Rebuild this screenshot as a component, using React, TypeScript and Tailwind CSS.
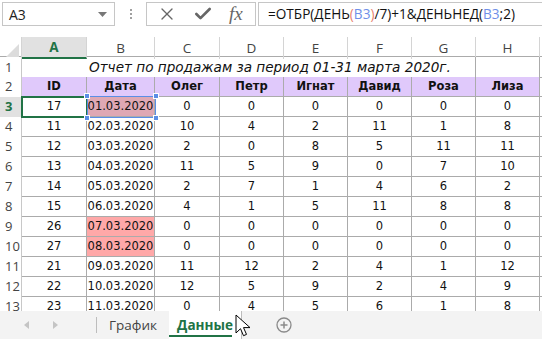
import { X, Check } from 'lucide-react';

const COLS = 'grid grid-cols-[22px_65px_68px_65px_64px_64px_64px_64px_64px_1fr]';
const LETTERS = ['A', 'B', 'C', 'D', 'E', 'F', 'G', 'H'];
const NAMES = ['ID', 'Дата', 'Олег', 'Петр', 'Игнат', 'Давид', 'Роза', 'Лиза'];

const rows: { n: number; id: number; date: string; vals: number[]; pink?: boolean }[] = [
  { n: 3, id: 17, date: '01.03.2020', vals: [0, 0, 0, 0, 0, 0] },
  { n: 4, id: 11, date: '02.03.2020', vals: [10, 4, 2, 11, 1, 8] },
  { n: 5, id: 12, date: '03.03.2020', vals: [2, 0, 8, 5, 11, 11] },
  { n: 6, id: 13, date: '04.03.2020', vals: [11, 5, 9, 0, 7, 10] },
  { n: 7, id: 14, date: '05.03.2020', vals: [2, 7, 1, 4, 6, 2] },
  { n: 8, id: 15, date: '06.03.2020', vals: [4, 1, 5, 11, 8, 8] },
  { n: 9, id: 26, date: '07.03.2020', vals: [0, 0, 0, 0, 0, 0], pink: true },
  { n: 10, id: 27, date: '08.03.2020', vals: [0, 0, 0, 0, 0, 0], pink: true },
  { n: 11, id: 21, date: '09.03.2020', vals: [11, 12, 2, 4, 1, 12] },
  { n: 12, id: 22, date: '10.03.2020', vals: [12, 5, 9, 2, 4, 9] },
  { n: 13, id: 23, date: '11.03.2020', vals: [0, 4, 5, 6, 1, 8] },
];

const ui = "font-['Open_Sans',sans-serif]";
const cellFont = "font-['DejaVu_Sans',sans-serif] text-[11.5px] text-[#111]";

function RowNum({ n, active }: { n: number; active?: boolean }) {
  return (
    <div className={`flex items-center pl-[5px] text-[13px] border-r border-[#c8c8c8] ${ui} ${active ? 'bg-[#e1e1e1] text-[#217346] font-bold' : 'text-[#444]'}`}>
      {n}
    </div>
  );
}

function Cell({ children, bg, bold }: { children?: React.ReactNode; bg?: string; bold?: boolean }) {
  return (
    <div className={`flex items-center justify-center border-r border-b border-[#ababab] ${bg ?? ''} ${bold ? 'font-bold' : ''}`}>
      {children}
    </div>
  );
}

function Handle({ className }: { className: string }) {
  return <div className={`absolute w-[6px] h-[6px] bg-[#5b8ee6] border border-white ${className}`} />;
}

export default function App() {
  return (
    <div className="w-[542px] h-[339px] bg-white overflow-hidden flex flex-col relative">
      {/* formula bar */}
      <div className="h-[30px] flex items-start pt-[2px]">
        <div className={`ml-[2px] w-[113px] h-[24px] border border-[#c6c6c6] flex items-center justify-between pl-[6px] pr-[7px] text-[14px] text-[#222] ${ui}`}>
          <span>A3</span>
          <svg width="9" height="5" viewBox="0 0 9 5"><path d="M0 0h9L4.5 5z" fill="#777" /></svg>
        </div>
        <div className="w-[31px] h-[24px] flex flex-col items-center justify-center gap-[2px]">
          <div className="w-[2px] h-[2px] bg-[#a0a0a0]" />
          <div className="w-[2px] h-[2px] bg-[#a0a0a0]" />
          <div className="w-[2px] h-[2px] bg-[#a0a0a0]" />
        </div>
        <div className="w-[110px] h-[24px] border border-[#c6c6c6] flex items-center pl-[10px] gap-[16px]">
          <X size={20} strokeWidth={1.6} color="#666" />
          <Check size={20} strokeWidth={3.2} color="#666" />
          <span className="font-['Liberation_Serif',serif] italic text-[19px] text-[#666] leading-none -mt-[2px]">fx</span>
        </div>
        <div className={`ml-[2px] flex-1 h-[24px] border-l border-t border-b border-[#c6c6c6] flex items-center pl-[9px] text-[13.6px] text-[#111] ${ui}`}>
          <span>=ОТБР(ДЕНЬ</span>
          <span className="text-[#e87f6f]">(</span>
          <span className="text-[#6f8fe8]">B3</span>
          <span className="text-[#e87f6f]">)</span>
          <span>/7)+1&amp;ДЕНЬНЕД(</span>
          <span className="text-[#6f8fe8]">B3</span>
          <span>;2)</span>
        </div>
      </div>

      {/* sheet */}
      <div className="mt-[7px] flex-1 relative overflow-hidden">
        <div className={`${COLS} h-[20px] border-b border-[#ababab] ${ui} text-[13.5px] text-[#444]`}>
          <div className="relative border-r border-[#d4d4d4]">
            <svg className="absolute right-[2px] bottom-[2px]" width="13" height="13" viewBox="0 0 13 13"><path d="M13 0V13H0z" fill="#dcdcdc" /></svg>
          </div>
          {LETTERS.map((l, i) => (
            <div key={l} className={`flex items-center justify-center border-r border-[#d4d4d4] ${i === 0 ? 'bg-[#e1e1e1] text-[#217346] font-bold border-b-2 border-b-[#217346]' : ''}`}>
              {l}
            </div>
          ))}
          <div />
        </div>

        <div className={cellFont}>
          {/* row 1 */}
          <div className={`${COLS} h-[20px]`}>
            <RowNum n={1} />
            <div className="border-b border-[#ababab]" />
            <div className="col-span-6 flex items-center pl-[2px] italic text-[13.6px] border-r border-b border-[#ababab] whitespace-nowrap">
              Отчет по продажам за период 01-31 марта 2020г.
            </div>
            <Cell />
            <div className="border-b border-[#ababab]" />
          </div>
          {/* row 2 */}
          <div className={`${COLS} h-[20px]`}>
            <RowNum n={2} />
            {NAMES.map((t) => (
              <Cell key={t} bg="bg-[#e0c9fb]" bold>{t}</Cell>
            ))}
            <div className="border-b border-[#ababab]" />
          </div>
          {rows.map((r) => (
            <div key={r.n} className={`${COLS} h-[20px]`}>
              <RowNum n={r.n} active={r.n === 3} />
              <Cell>{r.id}</Cell>
              <Cell bg={r.n === 3 ? 'bg-[#dfa8b4]' : r.pink ? 'bg-[#ffa8a8]' : ''}>{r.date}</Cell>
              {r.vals.map((v, i) => (
                <Cell key={i}>{v}</Cell>
              ))}
              <div className="border-b border-[#ababab]" />
            </div>
          ))}
        </div>

        {/* active cell A3 */}
        <div className="absolute left-[21px] top-[59px] w-[67px] h-[22px] border-2 border-[#217346]" />
        {/* referenced B3 */}
        <div className="absolute left-[87px] top-[59px] w-[69px] h-[22px] border-[1.5px] border-[#5b8ee6]">
          <Handle className="-left-[4px] -top-[4px]" />
          <Handle className="-right-[4px] -top-[4px]" />
          <Handle className="-left-[4px] -bottom-[4px]" />
          <Handle className="-right-[4px] -bottom-[4px]" />
        </div>
      </div>

      {/* sheet tabs */}
      <div className={`h-[28px] bg-[#f3f3f3] flex items-stretch ${ui} text-[13.5px]`}>
        <div className="w-[97px] flex items-center pl-[24px] gap-[24px] border-r border-[#bdbdbd] my-[6px]">
          <svg width="5" height="8" viewBox="0 0 5 8"><path d="M5 0V8L0 4z" fill="#c4c4c4" /></svg>
          <svg width="5" height="8" viewBox="0 0 5 8"><path d="M0 0V8L5 4z" fill="#c4c4c4" /></svg>
        </div>
        <div className="w-[72px] flex items-center justify-center text-[#444]">График</div>
        <div className="w-[73px] bg-white flex items-center justify-center relative border-r border-[#bdbdbd]">
          <span className="font-bold text-[#217346]">Данные</span>
          <div className="absolute left-0 right-[9px] bottom-[2px] h-[2px] bg-[#217346]" />
        </div>
        <div className="w-[84px] flex items-center justify-center">
          <svg width="16" height="16" viewBox="0 0 16 16">
            <circle cx="8" cy="8" r="7" fill="none" stroke="#8a8a8a" strokeWidth="1.3" />
            <path d="M8 4.5v7M4.5 8h7" stroke="#8a8a8a" strokeWidth="1.5" />
          </svg>
        </div>
      </div>

      {/* mouse cursor */}
      <svg className="absolute left-[235px] top-[314px]" width="16" height="24" viewBox="0 0 16 24">
        <path d="M1 1v18l4.5-4.3 3 7 3-1.3-3-6.8H15z" fill="#fff" stroke="#000" strokeWidth="1" strokeLinejoin="round" />
      </svg>
    </div>
  );
}
